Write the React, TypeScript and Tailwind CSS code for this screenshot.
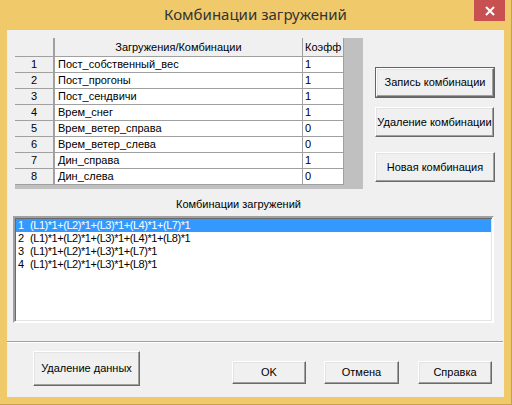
import React from 'react';

const loads = [
  { n: 1, name: 'Пост_собственный_вес', k: '1' },
  { n: 2, name: 'Пост_прогоны', k: '1' },
  { n: 3, name: 'Пост_сендвичи', k: '1' },
  { n: 4, name: 'Врем_снег', k: '1' },
  { n: 5, name: 'Врем_ветер_справа', k: '0' },
  { n: 6, name: 'Врем_ветер_слева', k: '0' },
  { n: 7, name: 'Дин_справа', k: '1' },
  { n: 8, name: 'Дин_слева', k: '0' },
];

const combos = [
  '(L1)*1+(L2)*1+(L3)*1+(L4)*1+(L7)*1',
  '(L1)*1+(L2)*1+(L3)*1+(L4)*1+(L8)*1',
  '(L1)*1+(L2)*1+(L3)*1+(L7)*1',
  '(L1)*1+(L2)*1+(L3)*1+(L8)*1',
];

// classic raised win32 button
function Btn({
  label,
  className = '',
  isDefault = false,
}: {
  label: string;
  className?: string;
  isDefault?: boolean;
}) {
  const face =
    'flex items-center justify-center bg-[#f0f0f0] border border-t-white border-l-white border-b-[#696969] border-r-[#696969] shadow-[inset_-1px_-1px_0_#a0a0a0,inset_1px_1px_0_#e3e3e3] text-[11px] text-black';
  if (isDefault) {
    return (
      <div className={`border border-[#646464] ${className}`}>
        <div className={`${face} w-full h-full`}>{label}</div>
      </div>
    );
  }
  return <div className={`${face} ${className}`}>{label}</div>;
}

export default function App() {
  return (
    <div
      className="w-[512px] h-[405px] bg-[#f0c96b] border-r border-b border-[#c9a04c] flex flex-col"
      style={{ fontFamily: '"Liberation Sans", Arial, sans-serif' }}
    >
      {/* title bar */}
      <div className="relative h-[30px] flex items-center justify-center shrink-0">
        <span
          className="text-[15px] text-[#333333] pb-[1px]"
          style={{ fontFamily: '"Noto Sans", "Open Sans", sans-serif' }}
        >
          Комбинации загружений
        </span>
        <div className="absolute right-[6px] top-0 w-[31px] h-[21px] bg-[#c75050] flex items-center justify-center">
          <svg width="10" height="10" viewBox="0 0 10 10">
            <path d="M1 1 L9 9 M9 1 L1 9" stroke="#fff" strokeWidth="2" />
          </svg>
        </div>
      </div>

      {/* client area */}
      <div className="ml-[7px] w-[497px] h-[367px] bg-[#f0f0f0] flex flex-col shrink-0">
        <div className="flex items-start pl-[8px] pt-[8px]">
          {/* grid */}
          <div className="w-[348px] h-[151px] bg-[#c0c0c0] text-[11px] text-black">
            <div className="flex h-[19px] w-[329px] bg-[#f0f0f0]">
              <div className="w-[40px] border-r-2 border-b border-[#a0a0a0]" />
              <div className="w-[248px] border-r border-b border-[#a0a0a0] flex items-center justify-center">
                Загружения/Комбинации
              </div>
              <div className="w-[41px] border-r border-b border-[#a0a0a0] flex items-center pl-[2px]">
                Коэфф
              </div>
            </div>
            {loads.map((r) => (
              <div key={r.n} className="flex h-[16px] w-[329px]">
                <div className="w-[40px] bg-[#f0f0f0] border-r-2 border-b border-[#a0a0a0] flex items-center justify-center">
                  {r.n}
                </div>
                <div className="w-[248px] bg-white border-r border-b border-[#a0a0a0] flex items-center pl-[3px]">
                  {r.name}
                </div>
                <div className="w-[41px] bg-white border-r border-b border-[#a0a0a0] flex items-center pl-[2px]">
                  {r.k}
                </div>
              </div>
            ))}
          </div>

          {/* side buttons */}
          <div className="ml-[12px] mt-[29px] flex flex-col">
            <Btn label="Запись комбинации" isDefault className="w-[120px] h-[31px]" />
            <Btn label="Удаление комбинации" className="w-[119px] h-[30px] mt-[9px]" />
            <Btn label="Новая комбинация" className="w-[120px] h-[30px] mt-[15px]" />
          </div>
        </div>

        <div className="mt-[9px] h-[13px] leading-[13px] text-[11px] text-black w-[463px] text-center">
          Комбинации загружений
        </div>

        {/* list box */}
        <div className="mt-[5px] ml-[6px] w-[481px] h-[107px] bg-white border-2 border-t-[#a0a0a0] border-l-[#a0a0a0] border-b-white border-r-white shadow-[inset_1px_1px_0_#696969,inset_-1px_-1px_0_#e3e3e3] p-[1px] pl-[1px] text-[11px] tracking-[-0.45px]">
          {combos.map((c, i) => (
            <div
              key={i}
              className={`flex h-[13px] leading-[13px] pl-[2px] ${
                i === 0 ? 'bg-[#3399ff] text-white' : 'text-black'
              }`}
            >
              <span className="w-[12px]">{i + 1}</span>
              <span>{c}</span>
            </div>
          ))}
        </div>

        {/* separator */}
        <div className="mt-[18px] w-[496px] border-t border-b border-t-[#a0a0a0] border-b-white" />

        <div className="flex items-start mt-[8px]">
          <Btn label="Удаление данных" className="ml-[26px] w-[107px] h-[35px]" />
          <Btn label="OK" className="ml-[92px] mt-[10px] w-[74px] h-[23px]" />
          <Btn label="Отмена" className="ml-[18px] mt-[10px] w-[75px] h-[23px]" />
          <Btn label="Справка" className="ml-[19px] mt-[10px] w-[74px] h-[23px]" />
        </div>
      </div>
    </div>
  );
}
